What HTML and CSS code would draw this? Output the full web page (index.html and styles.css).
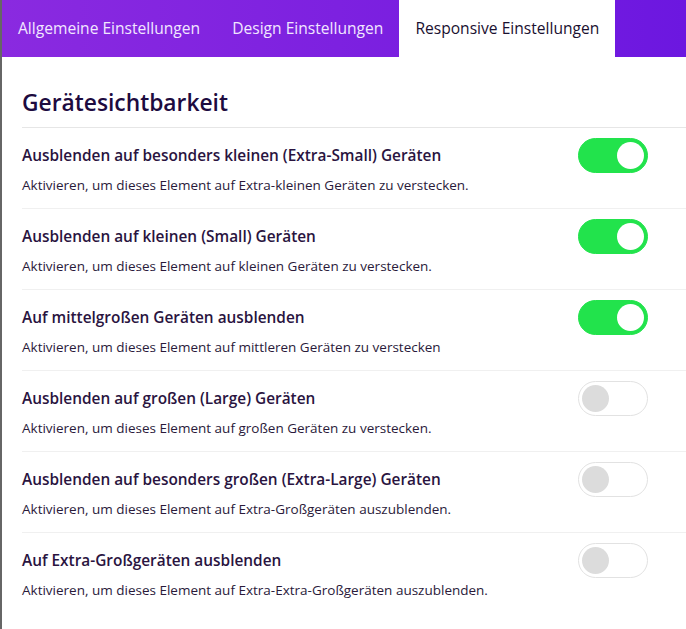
FILE: index.html
```html
<!DOCTYPE html>
<html lang="de">
<head>
<meta charset="utf-8">
<link rel="stylesheet" href="styles.css">
</head>
<body>
<div class="panel">
  <nav class="tabs">
    <div class="tab">Allgemeine Einstellungen</div>
    <div class="tab">Design Einstellungen</div>
    <div class="tab active">Responsive Einstellungen</div>
  </nav>
  <section class="content">
    <h2 class="heading">Gerätesichtbarkeit</h2>
    <div class="row">
      <div class="text">
        <div class="title">Ausblenden auf besonders kleinen (Extra-Small) Geräten</div>
        <div class="desc">Aktivieren, um dieses Element auf Extra-kleinen Geräten zu verstecken.</div>
      </div>
      <span class="toggle on"><span class="knob"></span></span>
    </div>
    <div class="row">
      <div class="text">
        <div class="title">Ausblenden auf kleinen (Small) Geräten</div>
        <div class="desc">Aktivieren, um dieses Element auf kleinen Geräten zu verstecken.</div>
      </div>
      <span class="toggle on"><span class="knob"></span></span>
    </div>
    <div class="row">
      <div class="text">
        <div class="title">Auf mittelgroßen Geräten ausblenden</div>
        <div class="desc">Aktivieren, um dieses Element auf mittleren Geräten zu verstecken</div>
      </div>
      <span class="toggle on"><span class="knob"></span></span>
    </div>
    <div class="row">
      <div class="text">
        <div class="title">Ausblenden auf großen (Large) Geräten</div>
        <div class="desc">Aktivieren, um dieses Element auf großen Geräten zu verstecken.</div>
      </div>
      <span class="toggle"><span class="knob"></span></span>
    </div>
    <div class="row">
      <div class="text">
        <div class="title">Ausblenden auf besonders großen (Extra-Large) Geräten</div>
        <div class="desc">Aktivieren, um dieses Element auf Extra-Großgeräten auszublenden.</div>
      </div>
      <span class="toggle"><span class="knob"></span></span>
    </div>
    <div class="row last">
      <div class="text">
        <div class="title">Auf Extra-Großgeräten ausblenden</div>
        <div class="desc">Aktivieren, um dieses Element auf Extra-Extra-Großgeräten auszublenden.</div>
      </div>
      <span class="toggle"><span class="knob"></span></span>
    </div>
  </section>
</div>
</body>
</html>
```
FILE: styles.css
```css
* { box-sizing: border-box; }
html, body { margin: 0; padding: 0; background: #fff; }
body {
  font-family: "Open Sans", "Noto Sans", "DejaVu Sans", sans-serif;
  color: #24123a;
}
.panel {
  width: 686px;
  height: 629px;
  border-left: 2px solid #666;
  overflow: hidden;
}
.tabs {
  display: flex;
  height: 57px;
  background: linear-gradient(90deg, #8a2ae0 0%, #7a1fe0 60%, #6c17e0 100%);
}
.tab {
  padding: 0 16px 2px;
  display: flex;
  align-items: center;
  font-size: 15.6px;
  color: #f1e6ff;
}
.tab.active {
  background: #fff;
  color: #1a1030;
}
.content {
  padding: 31px 0 0 20px;
}
.heading {
  margin: 0;
  font-size: 22.8px;
  line-height: 30px;
  font-weight: 600;
  color: #1d0b3f;
  padding-bottom: 9px;
  border-bottom: 1px solid #e6e6e6;
}
.row {
  display: flex;
  align-items: flex-start;
  justify-content: space-between;
  height: 81px;
  border-bottom: 1px solid #f0f0f0;
  padding-right: 38px;
}
.row.last { border-bottom: none; }
.text { padding-top: 18px; }
.title {
  font-size: 15.4px;
  line-height: 20px;
  font-weight: 600;
  color: #2a143f;
}
.desc {
  margin-top: 10px;
  font-size: 13.5px;
  line-height: 18px;
  color: #2a1a3a;
}
.toggle {
  margin-top: 10px;
  width: 70px;
  height: 35px;
  border-radius: 18px;
  border: 1px solid #e2e2e2;
  background: #fff;
  display: flex;
  align-items: center;
  padding: 0 3px;
  flex-shrink: 0;
}
.toggle.on {
  background: #22e34c;
  border-color: #22e34c;
  justify-content: flex-end;
}
.knob {
  width: 27px;
  height: 27px;
  border-radius: 50%;
  background: #dcdcdc;
}
.toggle.on .knob { background: #fff; }
```
